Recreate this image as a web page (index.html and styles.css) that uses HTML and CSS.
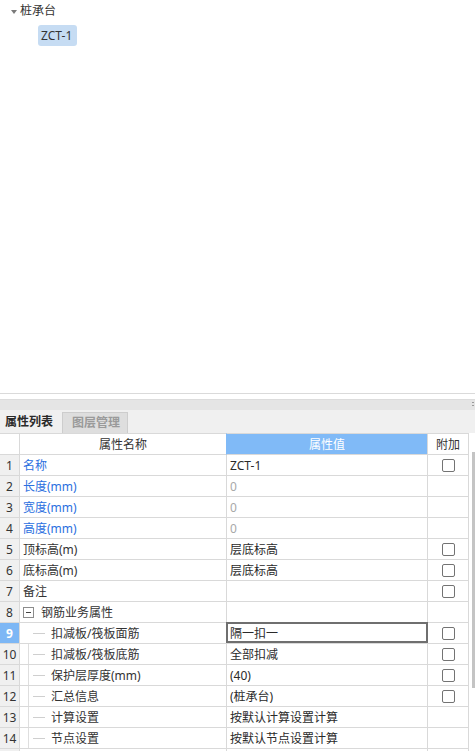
FILE: index.html
```html
<!DOCTYPE html>
<html lang="zh-CN">
<head>
<meta charset="utf-8">
<title>属性列表</title>
<link rel="stylesheet" href="styles.css">
</head>
<body>
<div class="tree-pane">
  <div class="tree-root"><span class="caret"></span><span class="tree-label">桩承台</span></div>
  <div class="tree-child"><span class="tree-item">ZCT-1</span></div>
</div>
<div class="divider"></div>
<div class="gap"></div>
<div class="splitter"><span class="grip"></span></div>
<div class="tabs">
  <div class="tab active">属性列表</div>
  <div class="tab">图层管理</div>
</div>
<div class="table-area">
  <div class="grid">
    <div class="c num h"></div>
    <div class="c h h-name">属性名称</div>
    <div class="c h h-val">属性值</div>
    <div class="c h h-add">附加</div>

    <div class="c num">1</div><div class="c name blue">名称</div><div class="c val">ZCT-1</div><div class="c add"><span class="cb"></span></div>
    <div class="c num">2</div><div class="c name blue">长度(mm)</div><div class="c val gray">0</div><div class="c add"></div>
    <div class="c num">3</div><div class="c name blue">宽度(mm)</div><div class="c val gray">0</div><div class="c add"></div>
    <div class="c num">4</div><div class="c name blue">高度(mm)</div><div class="c val gray">0</div><div class="c add"></div>
    <div class="c num">5</div><div class="c name">顶标高(m)</div><div class="c val">层底标高</div><div class="c add"><span class="cb"></span></div>
    <div class="c num">6</div><div class="c name">底标高(m)</div><div class="c val">层底标高</div><div class="c add"><span class="cb"></span></div>
    <div class="c num">7</div><div class="c name">备注</div><div class="c val"></div><div class="c add"><span class="cb"></span></div>
    <div class="c num">8</div><div class="c name group"><span class="collapse"></span><span>钢筋业务属性</span></div><div class="c val"></div><div class="c add"></div>
    <div class="c num sel">9</div><div class="c name child first"><span class="branch"></span><span>扣减板/筏板面筋</span></div><div class="c val editing">隔一扣一</div><div class="c add"><span class="cb"></span></div>
    <div class="c num">10</div><div class="c name child"><span class="branch"></span><span>扣减板/筏板底筋</span></div><div class="c val">全部扣减</div><div class="c add"><span class="cb"></span></div>
    <div class="c num">11</div><div class="c name child"><span class="branch"></span><span>保护层厚度(mm)</span></div><div class="c val">(40)</div><div class="c add"><span class="cb"></span></div>
    <div class="c num">12</div><div class="c name child"><span class="branch"></span><span>汇总信息</span></div><div class="c val">(桩承台)</div><div class="c add"><span class="cb"></span></div>
    <div class="c num">13</div><div class="c name child"><span class="branch"></span><span>计算设置</span></div><div class="c val">按默认计算设置计算</div><div class="c add"></div>
    <div class="c num">14</div><div class="c name child"><span class="branch"></span><span>节点设置</span></div><div class="c val">按默认节点设置计算</div><div class="c add"></div>
    <div class="c num"></div><div class="c name child"></div><div class="c val"></div><div class="c add"></div>
  </div>
  <div class="vscroll"><div class="thumb"></div></div>
</div>
</body>
</html>
```
FILE: styles.css
```css
html, body {
  margin: 0;
  padding: 0;
}
body {
  width: 475px;
  height: 751px;
  overflow: hidden;
  background: #ffffff;
  font-family: "Noto Sans", "Noto Sans CJK SC", sans-serif;
  font-size: 12px;
  color: #333333;
}

/* tree */
.tree-pane {
  height: 393px;
  background: #ffffff;
}
.tree-root {
  display: flex;
  align-items: center;
  height: 22px;
  padding-left: 11px;
}
.caret {
  width: 0;
  height: 0;
  border-left: 3.5px solid transparent;
  border-right: 3.5px solid transparent;
  border-top: 4px solid #7a7a7a;
  margin-right: 3px;
  margin-top: 1px;
}
.tree-label {
  line-height: 16px;
}
.tree-child {
  display: flex;
  padding-left: 38px;
  margin-top: 3px;
}
.tree-item {
  display: flex;
  align-items: center;
  height: 21px;
  padding: 0 5px 0 3px;
  background: #c6dcf3;
  border-radius: 3px;
}

/* divider and splitter */
.divider {
  height: 1px;
  background: #dadada;
}
.gap {
  height: 5px;
  background: #ffffff;
}
.splitter {
  height: 11px;
  background: #e5e5e5;
  border-top: 1px solid #dcdcdc;
  box-sizing: border-box;
  display: flex;
  justify-content: flex-end;
  align-items: center;
}
.grip {
  width: 2px;
  height: 6px;
  margin-right: 1px;
  background: repeating-linear-gradient(to bottom, #9a9a9a 0 1px, transparent 1px 3px);
}

/* tabs */
.tabs {
  height: 23px;
  background: #f0f0f0;
  display: flex;
  align-items: flex-end;
}
.tab {
  height: 21px;
  line-height: 20px;
  box-sizing: border-box;
  font-weight: bold;
}
.tab.active {
  width: 62px;
  padding-left: 5px;
  color: #2a2a2a;
}
.tab:not(.active) {
  width: 66px;
  padding-left: 9px;
  background: #dedede;
  border: 1px solid #cdcdcd;
  border-bottom: none;
  color: #9a9a9a;
}

/* table */
.table-area {
  display: flex;
}
.grid {
  display: grid;
  grid-template-columns: 20px 207px 201px 41px;
  grid-auto-rows: 21px;
  width: 469px;
}
.c {
  box-sizing: border-box;
  border-right: 1px solid #d9d9d9;
  border-bottom: 1px solid #d9d9d9;
  display: flex;
  align-items: center;
  white-space: nowrap;
  overflow: hidden;
  background: #ffffff;
}
.c.h {
  height: 22px;
  border-top: 1px solid #d9d9d9;
  justify-content: center;
  color: #333333;
}
.grid > .c:nth-child(-n+4) {
  height: 22px;
  border-top: 1px solid #d9d9d9;
}
.grid {
  grid-template-rows: 22px;
}
.h-name {
  border-right-color: #80baf7 !important;
}
.h-val {
  background: #80baf7;
  color: #ffffff !important;
}
.num {
  justify-content: center;
  background: #f0f0f0;
  color: #333333;
}
.num.h {
  background: #ffffff;
}
.num.sel {
  background: #7db7f5;
  color: #ffffff;
  font-weight: bold;
}
.name {
  padding-left: 3px;
}
.blue {
  color: #2b6fe0;
}
.val {
  padding-left: 3px;
  color: #2a2a2a;
}
.val.gray {
  color: #a8a8a8;
}
.val.editing {
  position: relative;
  overflow: visible;
}
.val.editing::after {
  content: "";
  position: absolute;
  left: -1px;
  top: -1px;
  right: -1px;
  bottom: 0;
  border: 2px solid #6f6f6f;
}
.add {
  justify-content: center;
}
.cb {
  width: 13px;
  height: 13px;
  box-sizing: border-box;
  border: 1px solid #737373;
  border-radius: 2px;
  background: #ffffff;
}

/* group / tree rows inside grid */
.group {
  padding-left: 3px;
}
.collapse {
  position: relative;
  width: 11px;
  height: 11px;
  box-sizing: border-box;
  border: 1px solid #8c8c8c;
  margin-right: 7px;
  display: flex;
  align-items: center;
  justify-content: center;
}
.collapse::before {
  content: "";
  width: 5px;
  height: 1px;
  background: #444444;
}
.child {
  padding-left: 8px;
}
.child .branch {
  align-self: stretch;
  width: 23px;
  box-sizing: border-box;
  border-left: 1px solid #dedede;
  display: flex;
  align-items: center;
  padding-left: 4px;
}
.child.first .branch {
  border-left-color: transparent;
}
.child .branch::before {
  content: "";
  width: 12px;
  height: 1px;
  background: #cfcfcf;
}

/* vertical scrollbar */
.vscroll {
  flex: 1;
  display: flex;
  justify-content: flex-end;
}
.thumb {
  width: 3px;
  height: 236px;
  margin-top: 19px;
  background: #c4c4c4;
}
```
